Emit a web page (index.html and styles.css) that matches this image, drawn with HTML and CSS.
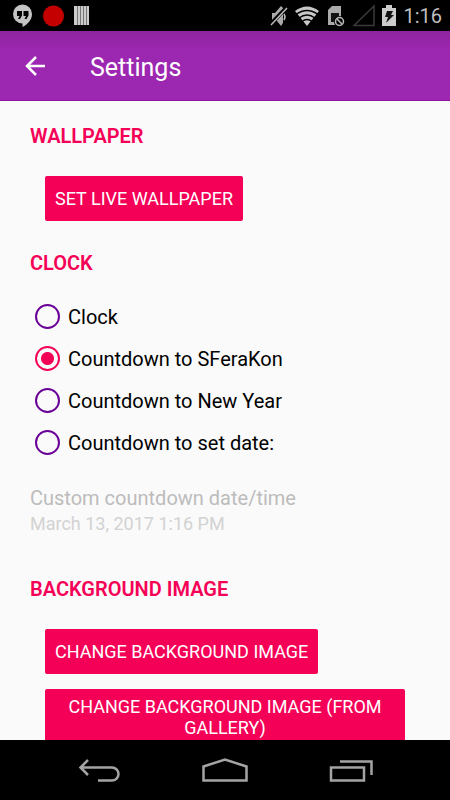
FILE: index.html
```html
<!DOCTYPE html>
<html lang="en">
<head>
<meta charset="utf-8">
<meta name="viewport" content="width=device-width, initial-scale=1">
<title>Settings</title>
<link rel="stylesheet" href="styles.css">
</head>
<body>
<div class="status-bar">
  <div class="status-group notifications">
    <svg width="21" height="24" viewBox="0 0 21 24" aria-hidden="true">
      <path fill="#c4c4c4" d="M10.500 .5a9.500 9.500 0 0 1 9.500 9.500c0 6-4.500 10.500-9.500 13v-3.500A9.500 9.500 0 1 1 10.500 .5z"/>
      <path fill="#000" d="M5 7h5v4.500L8 15H6l1.500-3H5zM11.500 7h5v4.500l-2 3.500h-2l1.500-3h-2.500z"/>
    </svg>
    <svg width="21" height="24" viewBox="0 0 21 24" aria-hidden="true"><circle cx="10.500" cy="12" r="10.500" fill="#c40000"/></svg>
    <svg width="15" height="24" viewBox="0 0 15 24" aria-hidden="true">
      <path fill="#777" d="M0 2h15v19H0z"/>
      <path fill="#ccc" d="M0 2h3v19H0zM4 2h2v19H4zM7 2h2v19H7zM10 2h2v19h-2zM13 2h2v19h-2z"/>
    </svg>
  </div>
  <div class="status-group system">
    <svg width="18" height="24" viewBox="0 0 18 24" aria-hidden="true">
      <path fill="#aaa" d="M2 9h3l6-7 2 2v15l-2 3-4-5H2z"/>
      <path fill="none" stroke="#000" stroke-width="4" d="M0 21L17 3"/>
      <path fill="none" stroke="#bbb" stroke-width="1.500" d="M1 21L17 4M14 10q2 3 0 6"/>
    </svg>
    <svg width="26" height="24" viewBox="0 0 26 24" aria-hidden="true">
      <path fill="#c8c8c8" d="M0 7Q12-2 24 7L12 22z"/>
      <path fill="none" stroke="#000" stroke-width="1.500" d="M1 10.500q11-8 22 0M4 14q8-6 16 0M7 17.500q5-4 10 0"/>
    </svg>
    <svg width="17" height="24" viewBox="0 0 17 24" aria-hidden="true">
      <path fill="#aaa" d="M4 2h9v19H0V6z"/>
      <path fill="#111" d="M3 9h8v9H3z"/>
      <circle cx="11.500" cy="17.500" r="5.500" fill="#000"/>
      <circle cx="11.500" cy="17.500" r="4" fill="none" stroke="#bbb" stroke-width="1.500"/>
      <path stroke="#bbb" stroke-width="1.500" d="M9 15l5 5"/>
    </svg>
    <svg width="23" height="24" viewBox="0 0 23 24" aria-hidden="true"><path fill="none" stroke="#3a3a3a" stroke-width="1.500" d="M2 21.500L22 2v19.500z"/></svg>
    <svg width="14" height="24" viewBox="0 0 14 24" aria-hidden="true">
      <path fill="#ccc" d="M4 1h6v3h4v18H0V4h4z"/>
      <path fill="#111" d="M5 7h6l-2 4h3l-8 8 2-6H3z"/>
    </svg>
    <time class="clock">1:16</time>
  </div>
</div>

<header class="app-bar">
  <button class="back" type="button" aria-label="Back">
    <svg width="22" height="20" viewBox="0 0 22 20" aria-hidden="true"><path fill="none" stroke="#fff" stroke-width="2.500" d="M21 10H3M12 1l-9 9 9 9"/></svg>
  </button>
  <h1 class="title">Settings</h1>
</header>

<main class="content">
  <section class="section">
    <h2 class="heading">WALLPAPER</h2>
    <div class="actions">
      <button class="action" type="button">SET LIVE WALLPAPER</button>
    </div>
  </section>

  <section class="section">
    <h2 class="heading">CLOCK</h2>
    <div class="options">
      <label class="option"><input class="radio" type="radio" name="clock"><span class="option-text">Clock</span></label>
      <label class="option"><input class="radio" type="radio" name="clock" checked><span class="option-text">Countdown to SFeraKon</span></label>
      <label class="option"><input class="radio" type="radio" name="clock"><span class="option-text">Countdown to New Year</span></label>
      <label class="option"><input class="radio" type="radio" name="clock"><span class="option-text">Countdown to set date:</span></label>
    </div>
    <div class="custom-date">
      <div class="custom-label">Custom countdown date/time</div>
      <div class="custom-value">March 13, 2017 1:16 PM</div>
    </div>
  </section>

  <section class="section">
    <h2 class="heading">BACKGROUND IMAGE</h2>
    <div class="actions">
      <button class="action" type="button">CHANGE BACKGROUND IMAGE</button>
      <button class="action" type="button">CHANGE BACKGROUND IMAGE (FROM GALLERY)</button>
    </div>
  </section>
</main>

<nav class="nav-bar">
  <button class="nav-button" type="button" aria-label="Back">
    <svg width="44" height="26" viewBox="0 0 44 26" aria-hidden="true"><path fill="none" stroke="#a4a4a4" stroke-width="2.500" d="M3 10.500h32a6.500 6.500 0 0 1 0 13H21M11 3l-7.500 7.500L11 18"/></svg>
  </button>
  <button class="nav-button" type="button" aria-label="Home">
    <svg width="46" height="26" viewBox="0 0 46 26" aria-hidden="true"><path fill="none" stroke="#a4a4a4" stroke-width="2.500" d="M1.500 9.500L23 2.500l21.500 7v14h-43z"/></svg>
  </button>
  <button class="nav-button" type="button" aria-label="Recent apps">
    <svg width="44" height="26" viewBox="0 0 44 26" aria-hidden="true"><path fill="none" stroke="#a4a4a4" stroke-width="2.500" d="M2 10.500h33v13H2zM11 4.500h31.500V18"/></svg>
  </button>
</nav>
</body>
</html>
```
FILE: styles.css
```css
* {
  box-sizing: border-box;
}

body {
  display: flex;
  flex-direction: column;
  height: 100vh;
  margin: 0;
  background: #fafafa;
  color: #000;
  font-family: Roboto, sans-serif;
  font-size: 20px;
  line-height: 24px;
}

button {
  border: 0;
  font: inherit;
}

svg {
  display: block;
}

.status-bar {
  display: flex;
  flex: none;
  align-items: center;
  justify-content: space-between;
  height: 31px;
  padding: 0 8px 0 12px;
  background: #000;
}

.status-group {
  display: flex;
  align-items: center;
}

.notifications {
  gap: 10px;
}

.system {
  gap: 7px;
}

.clock {
  color: #bebebe;
}

.app-bar {
  display: flex;
  flex: none;
  align-items: center;
  height: 70px;
  background: linear-gradient(#8e249f, #9c27b0 18px);
  border-bottom: 1px solid #9013a0;
  color: #fff;
}

.back {
  display: grid;
  place-items: center;
  width: 70px;
  height: 70px;
  padding: 0;
  background: none;
}

.title {
  margin: 0;
  padding: 4px 0 0 20px;
  font-size: 25px;
  font-weight: 400;
  line-height: 32px;
}

.content {
  flex: 1;
  min-height: 0;
  padding: 23px 30px 0;
  overflow: hidden;
}

.heading {
  margin: 0;
  color: #f50057;
  font-size: 20px;
  font-weight: 600;
  line-height: 24px;
}

.actions {
  display: flex;
  flex-direction: column;
  align-items: flex-start;
  gap: 15px;
  padding: 28px 15px 30px;
}

.action {
  min-height: 45px;
  padding: 7px 10px;
  border-radius: 2px;
  background: #f50057;
  color: #fff;
  font-size: 18px;
  line-height: 21px;
}

.options {
  padding: 20px 5px 0;
}

.option {
  display: flex;
  align-items: center;
  gap: 8px;
  height: 42px;
}

.option-text {
  padding-top: 2px;
}

.radio {
  width: 25px;
  height: 25px;
  margin: 0;
  appearance: none;
  border: 2px solid #6a0098;
  border-radius: 50%;
}

.radio:checked {
  border-color: #f50057;
  background: radial-gradient(circle, #f50057 6px, transparent 7px);
}

.custom-date {
  padding: 23px 0 41px;
}

.custom-label {
  color: #bcbcbc;
  line-height: 25px;
}

.custom-value {
  color: #d2d2d2;
  font-size: 18px;
  line-height: 25px;
}

.nav-bar {
  display: flex;
  flex: none;
  justify-content: center;
  height: 60px;
  background: #000;
}

.nav-button {
  display: grid;
  flex: 0 1 126px;
  place-items: center;
  padding: 0;
  background: none;
}
```
